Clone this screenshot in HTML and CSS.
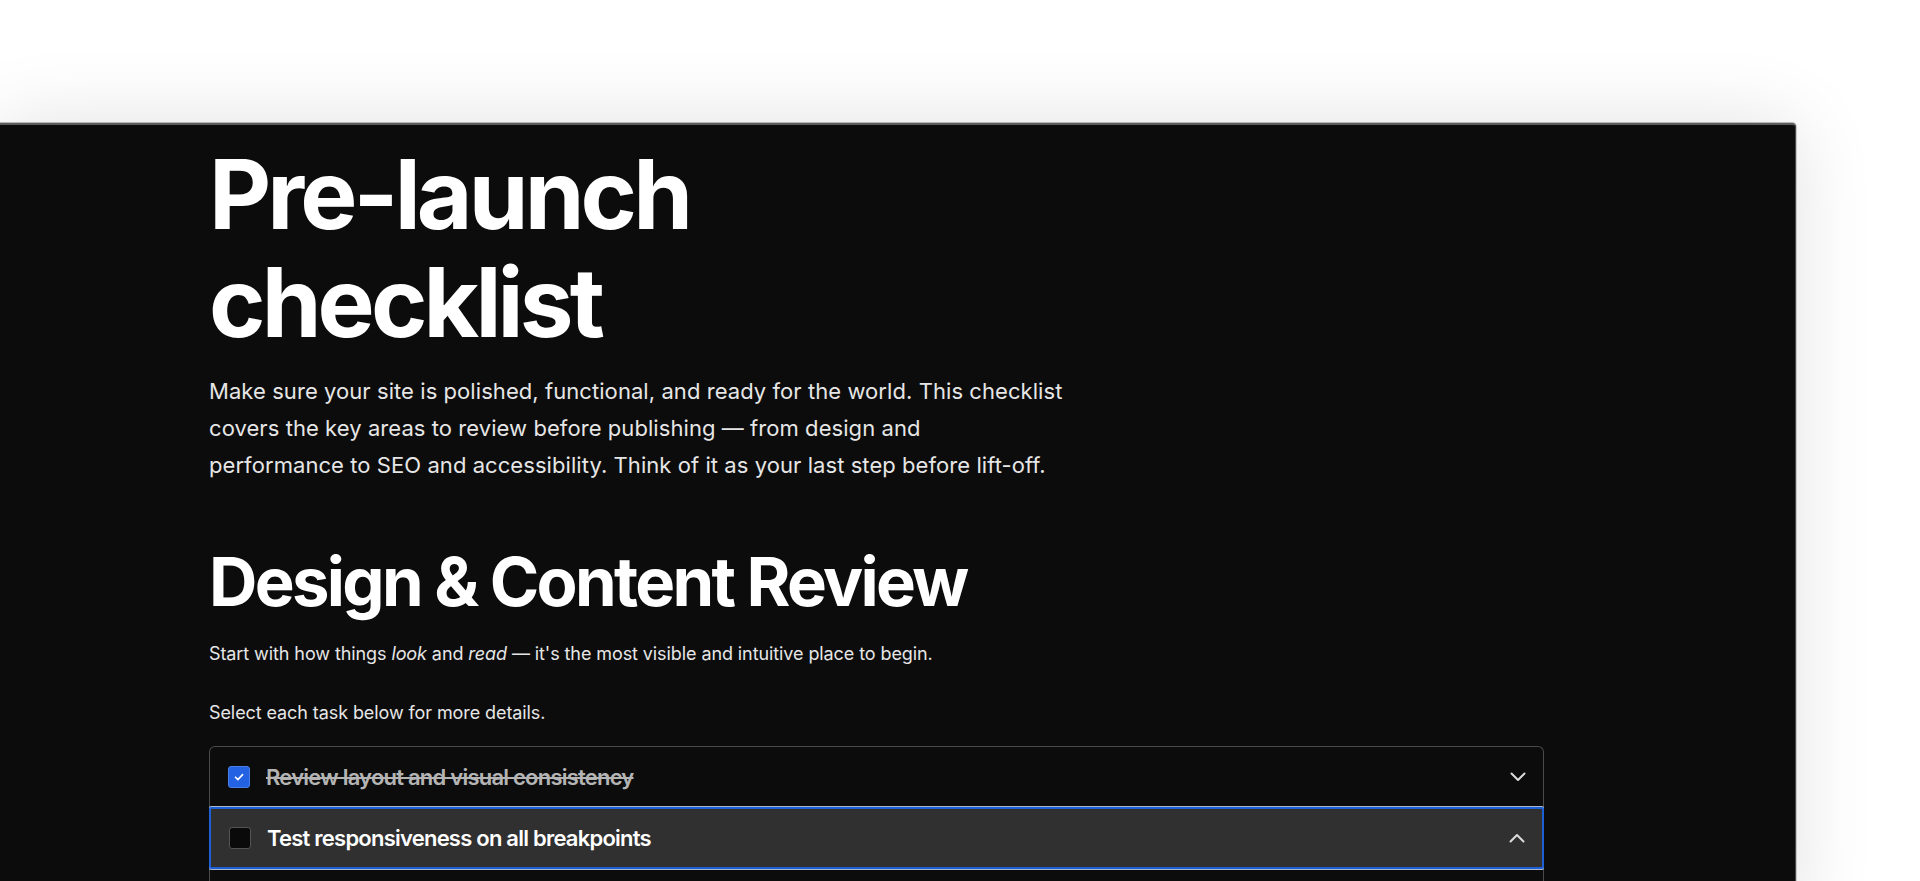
FILE: index.html
```html
<!DOCTYPE html>
<html lang="en">
<head>
<meta charset="utf-8">
<title>Pre-launch checklist</title>
<link rel="stylesheet" href="styles.css">
</head>
<body>
<div class="stage">
  <div class="window">
    <main class="content">
      <h1 class="title">Pre-launch<br>checklist</h1>
      <p class="lead">Make sure your site is polished, functional, and ready for the world. This checklist<br>covers the key areas to review before publishing — from design and<br>performance to SEO and accessibility. Think of it as your last step before lift-off.</p>

      <h2 class="section-title">Design &amp; Content Review</h2>
      <p class="section-intro">Start with how things <em>look</em> and <em>read</em> — it's the most visible and intuitive place to begin.</p>
      <p class="hint">Select each task below for more details.</p>

      <div class="accordion">
        <div class="item">
          <div class="item-head">
            <span class="check is-checked">
              <svg viewBox="0 0 12 12" width="12" height="12"><path d="M2.5 6.2l2.4 2.4L9.6 3.6" fill="none" stroke="#fff" stroke-width="1.6" stroke-linecap="round" stroke-linejoin="round"/></svg>
            </span>
            <span class="label is-done">Review layout and visual consistency</span>
            <svg class="chev" viewBox="0 0 16 10" width="16" height="10"><path d="M1.5 1.5L8 8l6.5-6.5" fill="none" stroke="#dcdcdc" stroke-width="2" stroke-linecap="round" stroke-linejoin="round"/></svg>
          </div>
        </div>
        <div class="item">
          <div class="item-head is-focused">
            <span class="check"></span>
            <span class="label">Test responsiveness on all breakpoints</span>
            <svg class="chev" viewBox="0 0 16 10" width="16" height="10"><path d="M1.5 8.5L8 2l6.5 6.5" fill="none" stroke="#dcdcdc" stroke-width="2" stroke-linecap="round" stroke-linejoin="round"/></svg>
          </div>
          <div class="item-body"></div>
        </div>
      </div>
    </main>
  </div>
</div>
</body>
</html>
```
FILE: styles.css
```css
* { box-sizing: border-box; }

html, body {
  margin: 0;
  height: 100%;
  background: #ffffff;
  font-family: Inter, "Liberation Sans", sans-serif;
  overflow: hidden;
}

.stage {
  height: 881px;
  padding-top: 123px;
  overflow: hidden;
}

.window {
  width: 1796px;
  height: 800px;
  background: #0c0c0c;
  border-top: 2px solid #5c5c5c;
  border-right: 1px solid #4a4a4a;
  border-top-right-radius: 4px;
  box-shadow: 0 -1px 0 0 #b8b8b8, 1px 0 0 0 #c8c8c8, 0 0 80px rgba(0, 0, 0, 0.12);
}

.content {
  width: 1544px;
  padding: 15px 0 0 209px;
  color: #ffffff;
}

.title {
  margin: 0;
  font-size: 96px;
  line-height: 108px;
  font-weight: 700;
  letter-spacing: -0.04em;
  color: #ffffff;
}

.lead {
  margin: 17px 0 0;
  font-size: 22px;
  line-height: 37px;
  color: #e6e6e6;
  font-weight: 400;
  letter-spacing: 0.003em;
}

.section-title {
  margin: 58px 0 0;
  font-size: 67px;
  line-height: 80px;
  font-weight: 700;
  letter-spacing: -0.04em;
  color: #ffffff;
}

.section-intro {
  margin: 20px 0 0;
  font-size: 18px;
  line-height: 24px;
  color: #e6e6e6;
  letter-spacing: -0.005em;
}

.section-intro em { font-style: italic; }

.hint {
  margin: 35px 0 0;
  font-size: 18px;
  line-height: 24px;
  color: #e6e6e6;
  letter-spacing: -0.005em;
}

.accordion {
  margin-top: 21px;
  border: 1px solid #4a4a4a;
  border-radius: 6px;
  border-bottom: none;
  height: 200px;
}

.item-head {
  height: 60px;
  display: flex;
  align-items: center;
  padding: 0 17px 0 18px;
  gap: 16px;
}

.item-head.is-focused {
  height: 62px;
  margin: 0 -1px;
  padding: 0 17px 0 18px;
  background: #303030;
  border: 2px solid #1d5fd4;
  border-radius: 2px;
  box-shadow: 0 1px 0 0 #a9b8d0, 0 -1px 0 0 #a9b8d0;
}

.check {
  flex: none;
  width: 22px;
  height: 22px;
  border-radius: 3px;
  border: 1.5px solid #545454;
  background: #0a0a0a;
  display: flex;
  align-items: center;
  justify-content: center;
}

.check.is-checked {
  background: #2262e3;
  border-color: #4a7fe6;
}

.label {
  flex: 1;
  font-size: 22px;
  font-weight: 600;
  letter-spacing: -0.035em;
  color: #ffffff;
}

.label.is-done {
  color: #b4b4b4;
  text-decoration: line-through;
  text-decoration-thickness: 1.5px;
}

.chev {
  flex: none;
}
```
